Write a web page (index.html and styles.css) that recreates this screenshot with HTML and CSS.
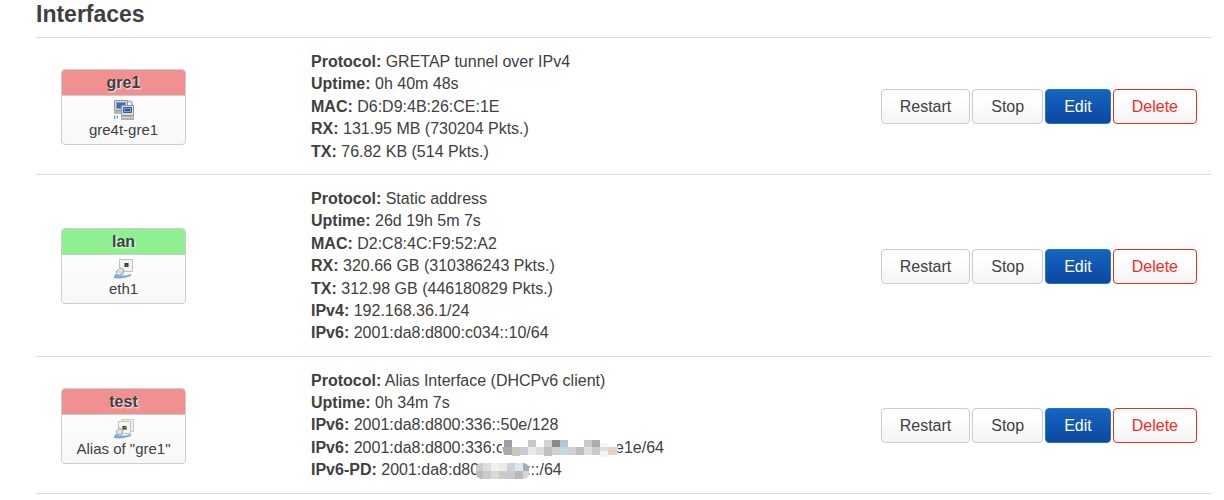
FILE: index.html
```html
<!DOCTYPE html>
<html lang="en">
<head>
<meta charset="utf-8">
<title>Interfaces</title>
<link rel="stylesheet" href="styles.css">
</head>
<body>
<svg class="defs" aria-hidden="true">
  <defs>
    <symbol id="tunnel" viewBox="0 0 20 20">
      <path d="M14 1.5h2.5q1.5 0 1.5 1.5v2" fill="none" stroke="#9dc0e8" stroke-width="2"/>
      <path d="M0 15h4v4H0z" fill="#cfe0f3"/><path d="M0 16h1v3H0zM3 16h1v2H3z" fill="#6b9cd8"/>
      <path d="M.5 .5h13v10H.5z" fill="#d9d9d6" stroke="#96968f"/>
      <path d="M2.5 2.5h9v6h-9z" fill="#3f6db0" stroke="#7d9fd2"/>
      <path d="M0 11h8v3H0z" fill="#b8b7b0"/>
      <path d="M7.5 5.5h12v10h-12z" fill="#deded9" stroke="#96968f"/>
      <path d="M9.5 7.5h8v5h-8z" fill="#7ea2d8" stroke="#2f5fa8"/>
      <path d="M11 9h5v2h-5z" fill="#2457a5"/>
      <path d="M7 16h13v4H7z" fill="#b2b1aa"/><path d="M8 17h11v1H8z" fill="#d8d7d0"/>
    </symbol>
    <symbol id="ethernet" viewBox="0 0 20 20">
      <path d="M5.5 .5h13v12h-13z" fill="#f3f3f2" stroke="#c3c3c1"/>
      <path d="M10 4h5v4h-5z" fill="#8f9187"/><path d="M11 4h3v4h-3z" fill="#3e3f28"/><path d="M12 6h1v1h-1z" fill="#a09a3c"/>
      <path d="M0 18q1-4 5-3c3 1 5 2 12 0v2c-6 2-10 3-17 2z" fill="#7ba5dc"/>
      <path d="M3 16c5 1 8 1 13-.5" fill="none" stroke="#b7d0ef"/>
      <path d="M2 13l4-4 4 2-1 4-4 1z" fill="#d6d6d5" stroke="#a1a3a5"/>
      <path d="M5 10l3 2M3 14l3 1" fill="none" stroke="#fff"/>
    </symbol>
    <symbol id="alias" viewBox="0 0 20 20">
      <path d="M7.5 .5h12v12h-12z" fill="#eeeeed" stroke="#c9c9c7"/>
      <path d="M4.5 2.5h12v12h-12z" fill="#f5f5f4" stroke="#c3c3c1"/>
      <path d="M8 7h5v4H8z" fill="#8f9187"/><path d="M9 7h3v3H9z" fill="#3e3f28"/><path d="M10 8h2v1h-2z" fill="#a09a3c"/>
      <path d="M0 18q1-4 5-3c3 1 5 2 12 0v2c-6 2-10 3-17 2z" fill="#7ba5dc"/>
      <path d="M3 16c5 1 8 1 13-.5" fill="none" stroke="#b7d0ef"/>
      <path d="M2 13l3-4 4 2-1 4-3 1z" fill="#e0e0df" stroke="#a1a3a5"/>
    </symbol>
  </defs>
</svg>
<main class="page">
  <h1 class="title">Interfaces</h1>
  <ul class="interfaces">
    <li class="row">
      <div class="box">
        <div class="box-head down">gre1</div>
        <div class="box-body"><svg class="icon" aria-hidden="true"><use href="#tunnel"/></svg><span>gre4t-gre1</span></div>
      </div>
      <div class="info">
        <div><strong>Protocol:</strong> GRETAP tunnel over IPv4</div>
        <div><strong>Uptime:</strong> 0h 40m 48s</div>
        <div><strong>MAC:</strong> D6:D9:4B:26:CE:1E</div>
        <div><strong>RX:</strong> 131.95 MB (730204 Pkts.)</div>
        <div><strong>TX:</strong> 76.82 KB (514 Pkts.)</div>
      </div>
      <div class="actions">
        <button class="btn" type="button">Restart</button>
        <button class="btn" type="button">Stop</button>
        <button class="btn primary" type="button">Edit</button>
        <button class="btn danger" type="button">Delete</button>
      </div>
    </li>
    <li class="row">
      <div class="box">
        <div class="box-head up">lan</div>
        <div class="box-body"><svg class="icon" aria-hidden="true"><use href="#ethernet"/></svg><span>eth1</span></div>
      </div>
      <div class="info">
        <div><strong>Protocol:</strong> Static address</div>
        <div><strong>Uptime:</strong> 26d 19h 5m 7s</div>
        <div><strong>MAC:</strong> D2:C8:4C:F9:52:A2</div>
        <div><strong>RX:</strong> 320.66 GB (310386243 Pkts.)</div>
        <div><strong>TX:</strong> 312.98 GB (446180829 Pkts.)</div>
        <div><strong>IPv4:</strong> 192.168.36.1/24</div>
        <div><strong>IPv6:</strong> 2001:da8:d800:c034::10/64</div>
      </div>
      <div class="actions">
        <button class="btn" type="button">Restart</button>
        <button class="btn" type="button">Stop</button>
        <button class="btn primary" type="button">Edit</button>
        <button class="btn danger" type="button">Delete</button>
      </div>
    </li>
    <li class="row">
      <div class="box">
        <div class="box-head down">test</div>
        <div class="box-body"><svg class="icon" aria-hidden="true"><use href="#alias"/></svg><span>Alias of "gre1"</span></div>
      </div>
      <div class="info">
        <div><strong>Protocol:</strong> Alias Interface (DHCPv6 client)</div>
        <div><strong>Uptime:</strong> 0h 34m 7s</div>
        <div><strong>IPv6:</strong> 2001:da8:d800:336::50e/128</div>
        <div><strong>IPv6:</strong> 2001:da8:d800:336:c<svg class="mask" width="118" height="18" viewBox="0 0 118 18" aria-hidden="true"><path d="M2 0h113l2 9-2 9H2L0 9z" fill="#fff"/><path d="M3 0h8v7H3z" fill="#9aa0a8"/><path d="M27 0h8v7h-8z" fill="#c8c8cc"/><path d="M43 0h8v7h-8z" fill="#d2d2d2"/><path d="M51 0h8v7h-8z" fill="#8a8690"/><path d="M59 0h8v7h-8z" fill="#b8c4d0"/><path d="M83 0h8v7h-8z" fill="#cfc6c6"/><path d="M91 0h8v7h-8z" fill="#b0aaaa"/><path d="M1 7h10v8H3z" fill="#aaa"/><path d="M11 7h8v9h-8z" fill="#cac4be"/><path d="M19 7h8v8h-8z" fill="#c8ccd2"/><path d="M27 7h8v8h-8z" fill="#e6e8ec"/><path d="M35 7h8v8h-8z" fill="#dcdcdd"/><path d="M43 7h8v9h-8z" fill="#c0bebe"/><path d="M51 7h8v8h-8z" fill="#d0d0d4"/><path d="M59 7h8v8h-8z" fill="#c4d8e4"/><path d="M67 7h8v8h-8z" fill="#d2d0d4"/><path d="M75 7h8v8h-8z" fill="#bfbfbf"/><path d="M83 7h8v8h-8z" fill="#e2deda"/><path d="M91 7h8v8h-8z" fill="#cacaca"/><path d="M99 3h8v14h-8z" fill="#f1f5fa"/><path d="M99 7h8v4h-8z" fill="#dcdfe2"/><path d="M107 7h9v8h-9z" fill="#e2d4c4"/></svg>e1e/64</div>
        <div><strong>IPv6-PD:</strong> 2001:da8:d80<svg class="mask" width="54" height="16" viewBox="0 0 54 16" aria-hidden="true"><clipPath id="pill"><rect width="53" height="16" rx="6"/></clipPath><g clip-path="url(#pill)"><path d="M0 0h53v16H0z" fill="#c8cacc"/><path d="M0 0h7v8H0z" fill="#cacdd0"/><path d="M7 0h8v8H7z" fill="#dcdddf"/><path d="M15 0h8v8h-8z" fill="#f0f0ef"/><path d="M23 0h8v8h-8z" fill="#ecebe6"/><path d="M31 0h8v8h-8z" fill="#cbd2d9"/><path d="M39 0h8v8h-8z" fill="#dce6ee"/><path d="M47 0h6v8h-6z" fill="#a4acb6"/><path d="M0 8h7v8H0z" fill="#b8bdc2"/><path d="M15 8h8v8h-8z" fill="#d8d8d8"/><path d="M39 8h8v8h-8z" fill="#b9b9ba"/><path d="M47 8h6v8h-6z" fill="#d6d6d6"/></g></svg>:::/64</div>
      </div>
      <div class="actions">
        <button class="btn" type="button">Restart</button>
        <button class="btn" type="button">Stop</button>
        <button class="btn primary" type="button">Edit</button>
        <button class="btn danger" type="button">Delete</button>
      </div>
    </li>
  </ul>
</main>
</body>
</html>
```
FILE: styles.css
```css
* { box-sizing: border-box; }

body {
  margin: 0;
  background: #fff;
  color: #404040;
  font: 16px/1.4 "Liberation Sans", Arial, sans-serif;
}

.defs { position: absolute; width: 0; height: 0; }

.page { padding: 0 13px 0 36px; }

.title {
  margin: 0;
  padding-bottom: 9px;
  font-size: 23px;
  line-height: 28px;
}

.interfaces {
  margin: 0;
  padding: 0;
  list-style: none;
}

.row {
  display: grid;
  grid-template-columns: 125px 1fr auto;
  column-gap: 125px;
  align-items: center;
  padding: 13px 14px 11px 25px;
  border-top: 1px solid #ddd;
}

.row:last-child { border-bottom: 1px solid #ddd; }

.box {
  overflow: hidden;
  border: 1px solid #ccc;
  border-radius: 4px;
  background: linear-gradient(#fff, #f8f8f8);
  text-align: center;
}

.box-head {
  border-bottom: 1px solid #ccc;
  font-weight: bold;
  line-height: 25px;
  text-shadow: 1px 1px 2px #fff;
}

.down { background: #f09090; }
.up { background: #90f090; }

.box-body {
  display: flex;
  flex-direction: column;
  align-items: center;
  padding: 4px 0 5px;
  font-size: 15px;
  line-height: 19px;
}

.icon { width: 20px; height: 20px; }

.info { white-space: nowrap; }

.mask {
  position: relative;
  margin: -4px -4px -4px -3px;
  vertical-align: middle;
}

.actions { display: flex; gap: 2px; }

.btn {
  padding: 5px 18px;
  border: 1px solid #ccc;
  border-radius: 4px;
  background: linear-gradient(#fff, #fff 25%, #f4f4f4);
  color: #404040;
  font: inherit;
  line-height: 23px;
  cursor: pointer;
}

.primary {
  border-color: #1976d2;
  background: linear-gradient(#1565c0, #0d47a1);
  color: #fff;
}

.danger {
  border-color: #f32c1e;
  color: #f32c1e;
}
```
